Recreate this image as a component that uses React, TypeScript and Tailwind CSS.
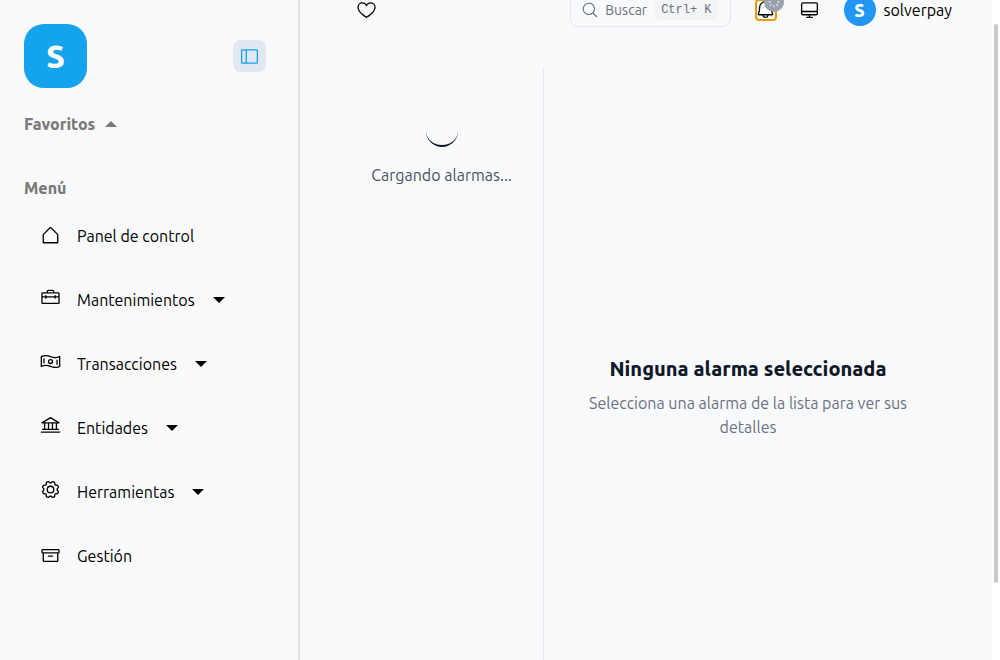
import type { IconType } from 'react-icons';
import {
  PiArchive,
  PiBank,
  PiBell,
  PiDesktop,
  PiGear,
  PiHeart,
  PiHouseSimple,
  PiMagnifyingGlass,
  PiMoneyWavy,
  PiSidebarSimple,
  PiSpinner,
  PiToolbox,
} from 'react-icons/pi';

type MenuEntry = { label: string; icon: IconType; expandable?: boolean };

const menu: MenuEntry[] = [
  { label: 'Panel de control', icon: PiHouseSimple },
  { label: 'Mantenimientos', icon: PiToolbox, expandable: true },
  { label: 'Transacciones', icon: PiMoneyWavy, expandable: true },
  { label: 'Entidades', icon: PiBank, expandable: true },
  { label: 'Herramientas', icon: PiGear, expandable: true },
  { label: 'Gestión', icon: PiArchive },
];

function Caret({ up = false }: { up?: boolean }) {
  return (
    <svg viewBox="0 0 12 6" className="h-1.5 w-3 fill-current" aria-hidden="true">
      <path d={up ? 'M0 6 6 0l6 6z' : 'M0 0h12L6 6z'} />
    </svg>
  );
}

function Sidebar() {
  return (
    <aside className="w-[300px] shrink-0 border-r-2 border-[#e0e0e0] py-6 pl-6 pr-8">
      <div className="flex items-center justify-between">
        <div className="flex h-16 w-[63px] items-center justify-center rounded-[20px] bg-[#14a4ee] text-[32px] font-extrabold text-white">
          S
        </div>
        <button
          type="button"
          aria-label="Contraer menú"
          className="flex h-8 w-[33px] items-center justify-center rounded-lg bg-[#e1e8f1] text-[#14a4ee]"
        >
          <PiSidebarSimple size={21} />
        </button>
      </div>
      <button type="button" className="mt-6 flex items-center gap-2.5 font-extrabold leading-6 text-[#7a7a7a]">
        Favoritos <Caret up />
      </button>
      <h2 className="mt-10 font-extrabold leading-6 text-[#7a7a7a]">Menú</h2>
      <nav className="mt-1">
        {menu.map(({ label, icon: Icon, expandable }) =>
          expandable ? (
            <button key={label} type="button" className="flex h-16 w-full items-center pl-4">
              <Icon size={21} className="mb-1.5" />
              <span className="ml-4">{label}</span>
              <span className="ml-[18px]">
                <Caret />
              </span>
            </button>
          ) : (
            <a key={label} href="#" className="flex h-16 items-center pl-4">
              <Icon size={21} className="mb-0.5" />
              <span className="ml-4">{label}</span>
            </a>
          ),
        )}
      </nav>
    </aside>
  );
}

function Header() {
  return (
    <header className="-mt-[22px] flex h-16 shrink-0 items-center pl-14 pr-10">
      <button type="button" aria-label="Favorito">
        <PiHeart size={21} className="mb-0.5" />
      </button>
      <button
        type="button"
        className="ml-auto flex h-[34px] items-center rounded-lg border border-gray-200 pl-2.5 pr-3 text-sm text-gray-500"
      >
        <PiMagnifyingGlass size={18} />
        <span className="ml-1.5">Buscar</span>
        <kbd className="ml-2 rounded bg-gray-100 px-1.5 py-0.5 font-['Liberation_Mono',monospace] text-xs font-normal leading-4">
          Ctrl+ K
        </kbd>
      </button>
      <button
        type="button"
        aria-label="Alarmas"
        className="relative ml-6 flex size-[22px] items-center justify-center rounded border-2 border-[#e59b0b]"
      >
        <PiBell size={21} className="mb-0.5 shrink-0" />
        <span className="absolute -right-[9px] -top-[9px] flex size-5 items-center justify-center rounded-full bg-gray-400 text-white">
          <PiSpinner size={14} />
        </span>
      </button>
      <button type="button" aria-label="Pantalla" className="ml-[22px]">
        <PiDesktop size={21} className="mb-0.5" />
      </button>
      <button type="button" className="ml-6 flex items-center gap-2">
        <span className="flex size-8 items-center justify-center rounded-full bg-[#2196f3] text-lg font-extrabold text-white">
          S
        </span>
        solverpay
      </button>
    </header>
  );
}

export default function App() {
  return (
    <div className="flex h-screen overflow-hidden bg-[#f9fafc] font-['Ubuntu','Noto_Sans',sans-serif] text-base font-[450] leading-6 text-black">
      <Sidebar />
      <div className="flex min-w-0 flex-1 flex-col">
        <Header />
        <main className="flex px-10 pt-[25px]">
          <section className="flex h-screen w-1/3 flex-col items-center border-r border-gray-200 pt-12">
            <div className="size-8 rounded-full border-b-2 border-gray-900" />
            <p className="mt-4 whitespace-nowrap text-gray-600">Cargando alarmas...</p>
          </section>
          <section className="flex h-screen flex-1 flex-col items-center justify-center px-8 text-center">
            <h1 className="text-xl font-extrabold leading-7 text-gray-900">Ninguna alarma seleccionada</h1>
            <p className="mt-2 text-gray-500">Selecciona una alarma de la lista para ver sus detalles</p>
          </section>
        </main>
      </div>
      <div className="w-2 shrink-0 bg-white px-0.5 pt-6">
        <div className="h-[559px] rounded-full bg-[#c9c9c9]" />
      </div>
    </div>
  );
}
